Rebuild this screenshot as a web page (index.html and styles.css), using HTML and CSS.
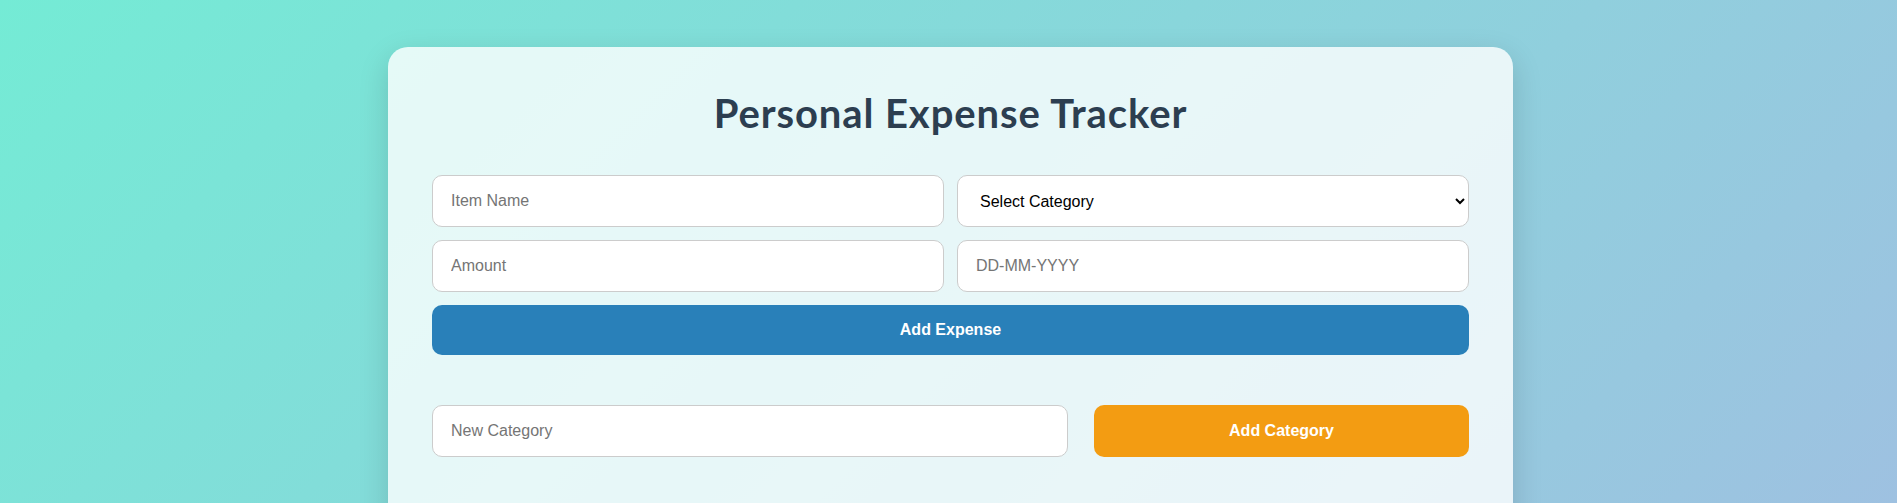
FILE: index.html
```html
<!DOCTYPE html>
<html lang="en">
<head>
<meta charset="utf-8">
<title>Personal Expense Tracker</title>
<link rel="stylesheet" href="styles.css">
</head>
<body>
  <main class="card">
    <h1 class="title">Personal Expense Tracker</h1>
    <form class="expense-form">
      <input class="field" type="text" placeholder="Item Name">
      <select class="field field-select">
        <option>Select Category</option>
        <option>Food</option>
        <option>Transport</option>
        <option>Shopping</option>
      </select>
      <input class="field" type="text" placeholder="Amount">
      <input class="field" type="text" placeholder="DD-MM-YYYY">
      <button class="btn btn-blue btn-wide" type="button">Add Expense</button>
    </form>
    <div class="category-row">
      <input class="field" type="text" placeholder="New Category">
      <button class="btn btn-orange" type="button">Add Category</button>
    </div>
    <section class="expense-list"></section>
  </main>
</body>
</html>
```
FILE: styles.css
```css
html {
  height: 100%;
}
body {
  margin: 0;
  min-height: 100%;
  padding: 47px 0 0 4px;
  box-sizing: border-box;
  background: linear-gradient(135deg, #74ebd5 0%, #9ec1e1 100%);
  font-family: "Liberation Sans", Arial, sans-serif;
}
.card {
  width: 1125px;
  box-sizing: border-box;
  margin: 0 auto;
  padding: 42px 44px 44px;
  background: rgba(255, 255, 255, 0.8);
  border-radius: 20px;
  box-shadow: 0 10px 30px rgba(0, 0, 0, 0.15);
}
.title {
  margin: 0 0 38px;
  font-family: Lato, "Open Sans", sans-serif;
  font-weight: 700;
  font-size: 40px;
  line-height: 48px;
  letter-spacing: 0.9px;
  color: #2c3e50;
  text-align: center;
}
.expense-form {
  display: grid;
  grid-template-columns: 1fr 1fr;
  gap: 13px 13px;
}
.field {
  height: 52px;
  box-sizing: border-box;
  padding: 0 18px;
  border: 1px solid #cccccc;
  border-radius: 10px;
  background: #ffffff;
  font-family: "Liberation Sans", Arial, sans-serif;
  font-size: 16px;
  color: #000000;
  outline: none;
}
.field::placeholder {
  color: #757575;
}
.field-select {
  color: #000000;
}
.btn {
  height: 50px;
  border: none;
  border-radius: 10px;
  color: #ffffff;
  font-family: "Liberation Sans", Arial, sans-serif;
  font-weight: 700;
  font-size: 16px;
  cursor: pointer;
}
.btn-wide {
  grid-column: 1 / -1;
}
.btn-blue {
  background: #2980b9;
}
.btn-orange {
  background: #f39c12;
  height: 52px;
}
.category-row {
  display: grid;
  grid-template-columns: 1fr 375px;
  gap: 26px;
  margin-top: 50px;
}
.expense-list {
  height: 80px;
}
```
